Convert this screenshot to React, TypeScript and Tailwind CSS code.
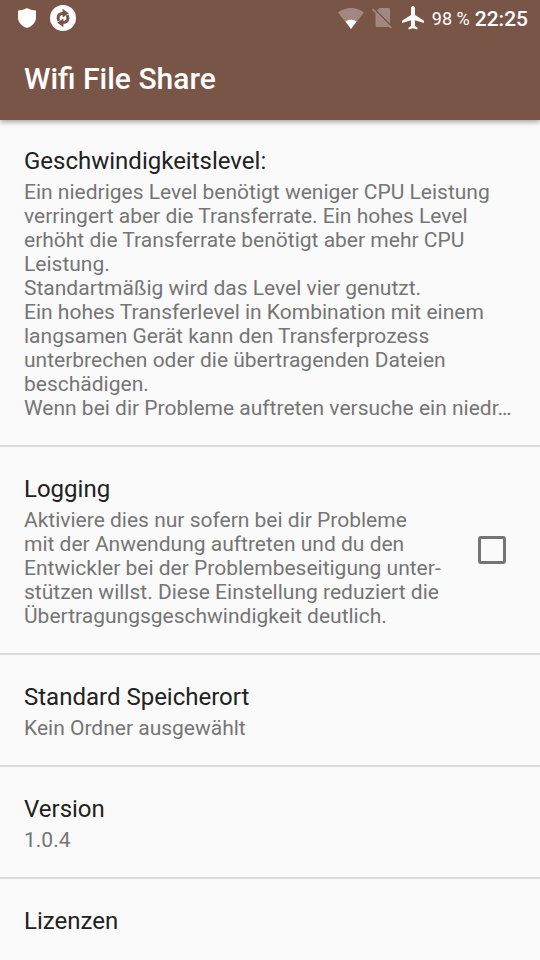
import React, { useState } from 'react';

type PreferenceProps = {
  title: string;
  children?: React.ReactNode;
};

function PreferenceText({ title, children }: PreferenceProps) {
  return (
    <span className="block pt-7 pb-[25px]">
      <span className="block text-[24px] leading-[28px] text-[#212121]">{title}</span>
      {children && (
        <span className="mt-[5px] block text-[21px] leading-[24px] text-[#757575]">{children}</span>
      )}
    </span>
  );
}

function Preference({ title, children }: PreferenceProps) {
  return (
    <button type="button" className="block w-full px-6 text-left">
      <PreferenceText title={title}>{children}</PreferenceText>
    </button>
  );
}

function StatusBar() {
  return (
    <div className="flex h-9 items-center justify-between pr-3 pl-[18px]">
      <div className="flex items-center gap-[14px]">
        <svg width="18" height="20" viewBox="0 0 18 20" fill="#fff" aria-hidden="true">
          <path d="M9 0C6.5 1.6 3.5 2.3 0 2.5V9.5C0 14.5 4 18.5 9 20C14 18.5 18 14.5 18 9.5V2.5C14.5 2.3 11.5 1.6 9 0Z" />
        </svg>
        <svg width="26" height="26" viewBox="0 0 26 26" aria-hidden="true">
          <circle cx="13" cy="13" r="13" fill="#fff" />
          <g fill="none" stroke="#795548" strokeWidth="3">
            <path d="M8.8 15.8C7 12 8.6 8.6 13 8.6" />
            <path d="M17.2 10.2C19 14 17.4 17.4 13 17.4" />
          </g>
          <path fill="#795548" d="M12.6 3.8L18.8 8.6L12.6 12.4ZM13.4 22.2L7.2 17.4L13.4 13.6Z" />
        </svg>
      </div>
      <div className="flex items-center text-white">
        <svg width="26" height="21" viewBox="0 0 26 21" aria-hidden="true">
          <path fill="#fff" fillOpacity="0.3" d="M0 4.5C7.5 -1.5 18.5 -1.5 26 4.5L13 21Z" />
          <path fill="#fff" d="M7.5 13.5C11 11 15 11 18.5 13.5L13 21Z" />
        </svg>
        <svg className="ml-2" width="20" height="22" viewBox="0 0 20 22" aria-hidden="true">
          <g fill="#fff" fillOpacity="0.3">
            <path d="M5 3.5L7.5 1H16.5C17.5 1 18 1.6 18 2.5V16.5Z" />
            <path d="M1.2 1.6L20 20.4L18.8 21.6L17.2 20H5C4 20 3.5 19.4 3.5 18.5V6.3L0 2.8Z" />
          </g>
        </svg>
        <svg className="ml-[10px]" width="22" height="24" viewBox="0 0 22 24" fill="#fff" aria-hidden="true">
          <path d="M22 17V14.7L13 9V2.5C13 1.1 12.1 0 11 0S9 1.1 9 2.5V9L0 14.7V17L9 14.2V20L6.5 21.8V23.5L11 22.3L15.5 23.5V21.8L13 20V14.2Z" />
        </svg>
        <span className="ml-2 pt-px text-[18px] leading-6">98 %</span>
        <span className="ml-[5px] pt-px text-[21px] leading-6 font-medium">22:25</span>
      </div>
    </div>
  );
}

export default function App() {
  const [logging, setLogging] = useState(false);

  return (
    <div className="min-h-screen bg-[#fafafa] font-[Roboto,sans-serif]">
      <header className="relative bg-[#795548] shadow-[0_2px_5px_rgba(0,0,0,0.35)]">
        <StatusBar />
        <div className="flex h-[84px] items-center px-6 pt-[2px]">
          <h1 className="text-[30px] leading-9 font-medium text-white">Wifi File Share</h1>
        </div>
      </header>

      <main className="-mt-px divide-y-2 divide-[#dadada]">
        <Preference title="Geschwindigkeitslevel:">
          Ein niedriges Level benötigt weniger CPU Leistung verringert aber die Transferrate. Ein hohes Level
          erhöht die Transferrate benötigt aber mehr CPU Leistung.
          <br />
          Standartmäßig wird das Level vier genutzt.
          <br />
          Ein hohes Transferlevel in Kombination mit einem langsamen Gerät kann den Transferprozess unterbrechen
          oder die übertragenden Dateien beschädigen.
          <br />
          <span className="whitespace-nowrap">Wenn bei dir Probleme auftreten versuche ein niedr…</span>
        </Preference>

        <label className="flex items-center justify-between pr-[34px] pl-6">
          <PreferenceText title="Logging">
            Aktiviere dies nur sofern bei dir Probleme
            <br />
            mit der Anwendung auftreten und du den
            <br />
            Entwickler bei der Problembeseitigung unter&shy;stützen willst. Diese Einstellung reduziert die
            Übertragungsgeschwindigkeit deutlich.
          </PreferenceText>
          <input
            type="checkbox"
            checked={logging}
            onChange={(e) => setLogging(e.target.checked)}
            className="ml-8 size-7 shrink-0 appearance-none rounded-[3px] border-3 border-[#757575] checked:bg-[#795548]"
          />
        </label>

        <Preference title="Standard Speicherort">Kein Ordner ausgewählt</Preference>
        <Preference title="Version">1.0.4</Preference>
        <Preference title="Lizenzen" />
      </main>
    </div>
  );
}
